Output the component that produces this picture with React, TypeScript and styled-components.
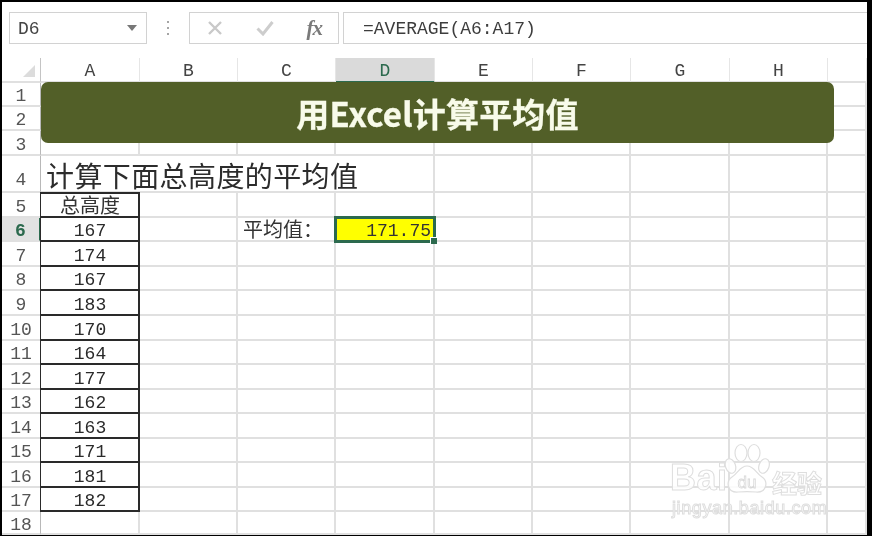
import React from "react";
import styled, { createGlobalStyle } from "styled-components";

const Global = createGlobalStyle`
  html, body { margin: 0; padding: 0; background: #000; width: 872px; height: 536px; overflow: hidden; }
`;

const MONO = `"Liberation Mono", "Noto Sans CJK SC", monospace`;
const CJK = `"Noto Sans CJK SC", sans-serif`;
const GRID = "#e0e0e0";
const GREEN = "#2c6a4e";
const INK = "#2a2a2a";

const Frame = styled.div`
  width: 865px;
  height: 533px;
  margin: 2px 5px 1px 2px;
  background: #fff;
  overflow: hidden;
  position: relative;
  filter: blur(0.45px);
`;

const Toolbar = styled.div`
  display: flex;
  align-items: flex-start;
  height: 56px;
  box-sizing: border-box;
  padding: 10px 0 0 7px;
`;

const Box = styled.div`
  height: 32px;
  box-sizing: border-box;
  border: 1.5px solid #d2d2d2;
  display: flex;
  align-items: center;
`;

const NameBox = styled(Box)`
  width: 138px;
  padding: 2px 9px 0 8px;
  justify-content: space-between;
  font: 18px ${MONO};
  color: #444;
`;

const Caret = styled.span`
  width: 0;
  height: 0;
  margin-top: -2px;
  border-left: 5px solid transparent;
  border-right: 5px solid transparent;
  border-top: 6px solid #777;
`;

const Grip = styled.div`
  width: 42px;
  height: 32px;
  display: flex;
  flex-direction: column;
  align-items: center;
  justify-content: center;
  gap: 4px;
`;

const GripDot = styled.span`
  width: 2px;
  height: 2px;
  background: #a5a5a5;
`;

const ActionBox = styled(Box)`
  width: 150px;
  padding: 0 16px 0 17px;
  justify-content: space-between;
`;

const Fx = styled.span`
  font: italic bold 21px "Liberation Serif", serif;
  color: #7a7a7a;
  letter-spacing: -1px;
`;

const FormulaBox = styled(Box)`
  flex: 1;
  margin-left: 4px;
  border-right: 0;
  padding: 2px 0 0 19px;
  font: 18px ${MONO};
  color: #3d3d3d;
`;

const Sheet = styled.div`
  display: grid;
  grid-template-columns: 39px 99px 98px 98px 99px 98px 98px 99px 98px 39px;
  grid-template-rows: 25px 24px 24px 25px 37px 25px 24px 25px 24px 25px 25px 24px 25px 24px 25px 24px 25px 24px 23px;
  position: relative;
`;

const Corner = styled.div`
  position: relative;
  border-right: 1.5px solid #c4c4c4;
  border-bottom: 2px solid ${GRID};
  &::after {
    content: "";
    position: absolute;
    right: 5px;
    bottom: 4px;
    width: 0;
    height: 0;
    border-left: 12px solid transparent;
    border-bottom: 12px solid #dcdcdc;
  }
`;

const ColHead = styled.div<{ $active?: boolean }>`
  display: flex;
  align-items: center;
  justify-content: center;
  box-sizing: border-box;
  padding-top: 2px;
  font: 18px ${MONO};
  color: ${(p) => (p.$active ? GREEN : "#444")};
  background: ${(p) => (p.$active ? "#dadada" : "#fff")};
  border-right: 1.5px solid #e6e6e6;
  border-bottom: 2px solid ${(p) => (p.$active ? GREEN : GRID)};
`;

const RowHead = styled.div<{ $active?: boolean; $low?: boolean }>`
  display: flex;
  align-items: ${(p) => (p.$low ? "flex-end" : "center")};
  justify-content: center;
  box-sizing: border-box;
  padding-top: ${(p) => (p.$low ? "0" : "4px")};
  padding-bottom: ${(p) => (p.$low ? "1px" : "0")};
  font: ${(p) => (p.$active ? "bold" : "normal")} 18px ${MONO};
  color: ${(p) => (p.$active ? GREEN : "#555")};
  background: ${(p) => (p.$active ? "#e2e2e2" : "#fff")};
  border-right: ${(p) => (p.$active ? `2px solid ${GREEN}` : "1.5px solid #b8b8b8")};
  border-bottom: 2px solid ${GRID};
`;

const Cell = styled.div`
  box-sizing: border-box;
  border-right: 2px solid ${GRID};
  border-bottom: 2px solid ${GRID};
`;

const TitleCell = styled(Cell)`
  grid-column: span 4;
  display: flex;
  align-items: flex-end;
  padding: 0 0 0 5px;
  font: 400 28px/32px ${CJK};
  letter-spacing: 0.4px;
  color: #2c2c2c;
  white-space: nowrap;
`;

const DataCell = styled.div<{ $top?: boolean }>`
  display: flex;
  align-items: center;
  justify-content: center;
  box-sizing: border-box;
  padding: 4px 0 0 1px;
  font: 18px ${MONO};
  color: ${INK};
  border-right: 2px solid ${INK};
  border-bottom: 2px solid ${INK};
  border-left: 1px solid ${INK};
  margin-left: -1px;
  ${(p) => (p.$top ? `border-top: 2px solid ${INK}; margin-top: -1px; padding-top: 0;` : "")}
`;

const HeadText = styled.span`
  font: 400 20px/1 ${CJK};
  color: #333;
`;

const LabelCell = styled(Cell)`
  display: flex;
  align-items: center;
  padding-left: 5px;
  font: 400 20px/1 ${CJK};
  color: #333;
  white-space: nowrap;
`;

const SelectedCell = styled.div`
  position: relative;
  z-index: 2;
  box-sizing: border-box;
  margin: -2px -1px -1px -2px;
  background: #ffff00;
  border: 3px solid ${GREEN};
  display: flex;
  align-items: center;
  justify-content: flex-end;
  padding: 3px 2px 0 0;
  font: 18px ${MONO};
  color: #333;
  &::after {
    content: "";
    position: absolute;
    right: -4px;
    bottom: -4px;
    width: 7px;
    height: 7px;
    background: ${GREEN};
    border: 1px solid #fff;
    border-width: 1px 0 0 1px;
    box-sizing: border-box;
  }
`;

const Banner = styled.div`
  position: absolute;
  left: 39px;
  top: 24px;
  width: 793px;
  height: 61px;
  box-sizing: border-box;
  padding-top: 1px;
  border-radius: 7px;
  background: #525f28;
  display: flex;
  align-items: center;
  justify-content: center;
  font: 700 33px/1 ${CJK};
  letter-spacing: 0.2px;
  color: #f8fbea;
  -webkit-text-stroke: 0.3px #f8fbea;
  z-index: 3;
`;

const Watermark = styled.div`
  position: absolute;
  left: 668px;
  top: 441px;
  width: 160px;
  z-index: 4;
  display: flex;
  flex-direction: column;
  color: rgba(255, 255, 255, 0.85);
  -webkit-text-stroke: 1px #dedede;
`;

const LogoRow = styled.div`
  display: flex;
  align-items: flex-end;
  height: 52px;
`;

const Bai = styled.span`
  font: 700 36px/34px "Liberation Sans", sans-serif;
  width: 54px;
  letter-spacing: 0.5px;
`;

const Paw = styled.svg`
  width: 46px;
  height: 52px;
  flex: none;
  margin-right: 2px;
`;

const Jingyan = styled.span`
  font: 700 25px/26px ${CJK};
  white-space: nowrap;
`;

const Domain = styled.span`
  font: 400 18px/20px "Liberation Sans", sans-serif;
  letter-spacing: 0.6px;
  white-space: nowrap;
  margin-top: 3px;
  margin-left: 2px;
`;

const cols = ["A", "B", "C", "D", "E", "F", "G", "H"];
const values: Record<number, string> = {
  6: "167", 7: "174", 8: "167", 9: "183", 10: "170", 11: "164",
  12: "177", 13: "162", 14: "163", 15: "171", 16: "181", 17: "182",
};
const restCols = Array.from({ length: 9 }, (_, i) => i);
const rows = Array.from({ length: 18 }, (_, i) => i + 1);

function Row({ n }: { n: number }) {
  if (n === 4) {
    return (
      <>
        <RowHead $low>4</RowHead>
        <TitleCell>计算下面总高度的平均值</TitleCell>
        {restCols.slice(4).map((c) => <Cell key={c} />)}
      </>
    );
  }
  return (
    <>
      <RowHead $active={n === 6}>{n}</RowHead>
      {n === 5 ? (
        <DataCell $top><HeadText>总高度</HeadText></DataCell>
      ) : values[n] ? (
        <DataCell>{values[n]}</DataCell>
      ) : (
        <Cell />
      )}
      {restCols.slice(1).map((c) => {
        if (n === 6 && c === 2) return <LabelCell key={c}>平均值：</LabelCell>;
        if (n === 6 && c === 3) return <SelectedCell key={c}>171.75</SelectedCell>;
        return <Cell key={c} />;
      })}
    </>
  );
}

export default function App() {
  return (
    <>
      <Global />
      <Frame>
        <Toolbar>
          <NameBox>D6<Caret /></NameBox>
          <Grip><GripDot /><GripDot /><GripDot /></Grip>
          <ActionBox>
            <svg width="16" height="16" viewBox="0 0 16 16">
              <path d="M2 2 L14 14 M14 2 L2 14" stroke="#c9c9c9" strokeWidth="2.4" fill="none" />
            </svg>
            <svg width="18" height="16" viewBox="0 0 18 16">
              <path d="M1.5 8.500 L7 14 L16.500 2" stroke="#cdcdcd" strokeWidth="3" fill="none" />
            </svg>
            <Fx>fx</Fx>
          </ActionBox>
          <FormulaBox>=AVERAGE(A6:A17)</FormulaBox>
        </Toolbar>
        <Sheet>
          <Corner />
          {cols.map((c) => <ColHead key={c} $active={c === "D"}>{c}</ColHead>)}
          <ColHead />
          {rows.map((n) => <Row key={n} n={n} />)}
          <Banner>用Excel计算平均值</Banner>
        </Sheet>
        <Watermark>
          <LogoRow>
            <Bai>Bai</Bai>
            <Paw viewBox="0 0 46 52">
              <g fill="rgba(255,255,255,.85)" stroke="#dedede" strokeWidth="1.2">
                <ellipse cx="6.500" cy="23" rx="5" ry="7.500" transform="rotate(-20 6.500 23)" />
                <ellipse cx="17" cy="10" rx="6" ry="8.500" />
                <ellipse cx="30" cy="10" rx="6" ry="8.500" />
                <ellipse cx="40" cy="23" rx="5" ry="7.500" transform="rotate(20 40 23)" />
                <path d="M23 23 C30 23 32 30 38 34 C45 39 42 50 32 49 C27 48.500 19 48.500 14 49 C4 50 1 39 8 34 C14 30 16 23 23 23 Z" />
              </g>
              <text x="23" y="45" textAnchor="middle" fontFamily="Liberation Sans, sans-serif" fontSize="17" fill="none" stroke="#d8d8d8" strokeWidth=".8">du</text>
            </Paw>
            <Jingyan>经验</Jingyan>
          </LogoRow>
          <Domain>jingyan.baidu.com</Domain>
        </Watermark>
      </Frame>
    </>
  );
}
